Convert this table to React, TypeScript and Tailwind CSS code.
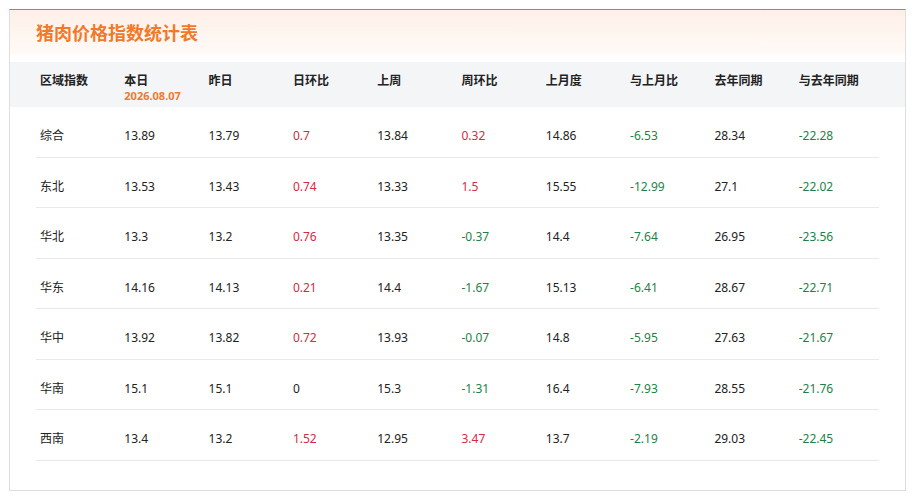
const columns = ["区域指数", "本日", "昨日", "日环比", "上周", "周环比", "上月度", "与上月比", "去年同期", "与去年同期"];

type Row = {
  region: string;
  today: string;
  yesterday: string;
  dayRatio: string;
  lastWeek: string;
  weekRatio: string;
  lastMonth: string;
  monthRatio: string;
  lastYear: string;
  yearRatio: string;
};

const rows: Row[] = [
  { region: "综合", today: "13.89", yesterday: "13.79", dayRatio: "0.7", lastWeek: "13.84", weekRatio: "0.32", lastMonth: "14.86", monthRatio: "-6.53", lastYear: "28.34", yearRatio: "-22.28" },
  { region: "东北", today: "13.53", yesterday: "13.43", dayRatio: "0.74", lastWeek: "13.33", weekRatio: "1.5", lastMonth: "15.55", monthRatio: "-12.99", lastYear: "27.1", yearRatio: "-22.02" },
  { region: "华北", today: "13.3", yesterday: "13.2", dayRatio: "0.76", lastWeek: "13.35", weekRatio: "-0.37", lastMonth: "14.4", monthRatio: "-7.64", lastYear: "26.95", yearRatio: "-23.56" },
  { region: "华东", today: "14.16", yesterday: "14.13", dayRatio: "0.21", lastWeek: "14.4", weekRatio: "-1.67", lastMonth: "15.13", monthRatio: "-6.41", lastYear: "28.67", yearRatio: "-22.71" },
  { region: "华中", today: "13.92", yesterday: "13.82", dayRatio: "0.72", lastWeek: "13.93", weekRatio: "-0.07", lastMonth: "14.8", monthRatio: "-5.95", lastYear: "27.63", yearRatio: "-21.67" },
  { region: "华南", today: "15.1", yesterday: "15.1", dayRatio: "0", lastWeek: "15.3", weekRatio: "-1.31", lastMonth: "16.4", monthRatio: "-7.93", lastYear: "28.55", yearRatio: "-21.76" },
  { region: "西南", today: "13.4", yesterday: "13.2", dayRatio: "1.52", lastWeek: "12.95", weekRatio: "3.47", lastMonth: "13.7", monthRatio: "-2.19", lastYear: "29.03", yearRatio: "-22.45" },
];

// up = red, down = green, flat = plain
const trendColor = (v: string) => {
  const n = parseFloat(v);
  if (n > 0) return "text-[#d42a44]";
  if (n < 0) return "text-[#1f7f4a]";
  return "text-[#222]";
};

function Cell({ children, className = "" }: { children: React.ReactNode; className?: string }) {
  return <div className={`pl-1 ${className}`}>{children}</div>;
}

export default function App() {
  return (
    <div className="min-h-[498px] bg-white pt-[9px] pl-[9px] font-['Noto_Sans','Noto_Sans_CJK_SC',sans-serif]">
      <div className="w-[897px] border border-[#dedede] border-t-[#ec6c2e] pb-[29px]">
        <div className="h-[44px] flex items-center px-[26px] bg-gradient-to-b from-[#fef0e7] to-[#fffaf7]">
          <h2 className="text-[18px] font-bold leading-none text-[#f07a2c] pt-[2px]">猪肉价格指数统计表</h2>
        </div>

        <div className="mt-[8px] h-[45px] bg-[#f4f5f7] px-[26px]">
          <div className="grid grid-cols-10 h-full w-[843px] text-[12px] font-bold text-[#222]">
            {columns.map((c, i) => (
              <Cell key={c} className="pt-[11px] leading-[16px]">
                <div>{c}</div>
                {i === 1 && <div className="text-[11px] leading-[13px] text-[#ee7a30]">2026.08.07</div>}
              </Cell>
            ))}
          </div>
        </div>

        <div className="px-[26px]">
          {rows.map((r) => (
            <div
              key={r.region}
              className="grid grid-cols-10 w-[843px] border-b border-[#e9e9e9] text-[12px] leading-[16px] text-[#222] pt-[21px] pb-[12.5px]"
            >
              <Cell>{r.region}</Cell>
              <Cell>{r.today}</Cell>
              <Cell>{r.yesterday}</Cell>
              <Cell className={trendColor(r.dayRatio)}>{r.dayRatio}</Cell>
              <Cell>{r.lastWeek}</Cell>
              <Cell className={trendColor(r.weekRatio)}>{r.weekRatio}</Cell>
              <Cell>{r.lastMonth}</Cell>
              <Cell className={trendColor(r.monthRatio)}>{r.monthRatio}</Cell>
              <Cell>{r.lastYear}</Cell>
              <Cell className={trendColor(r.yearRatio)}>{r.yearRatio}</Cell>
            </div>
          ))}
        </div>
      </div>
    </div>
  );
}
